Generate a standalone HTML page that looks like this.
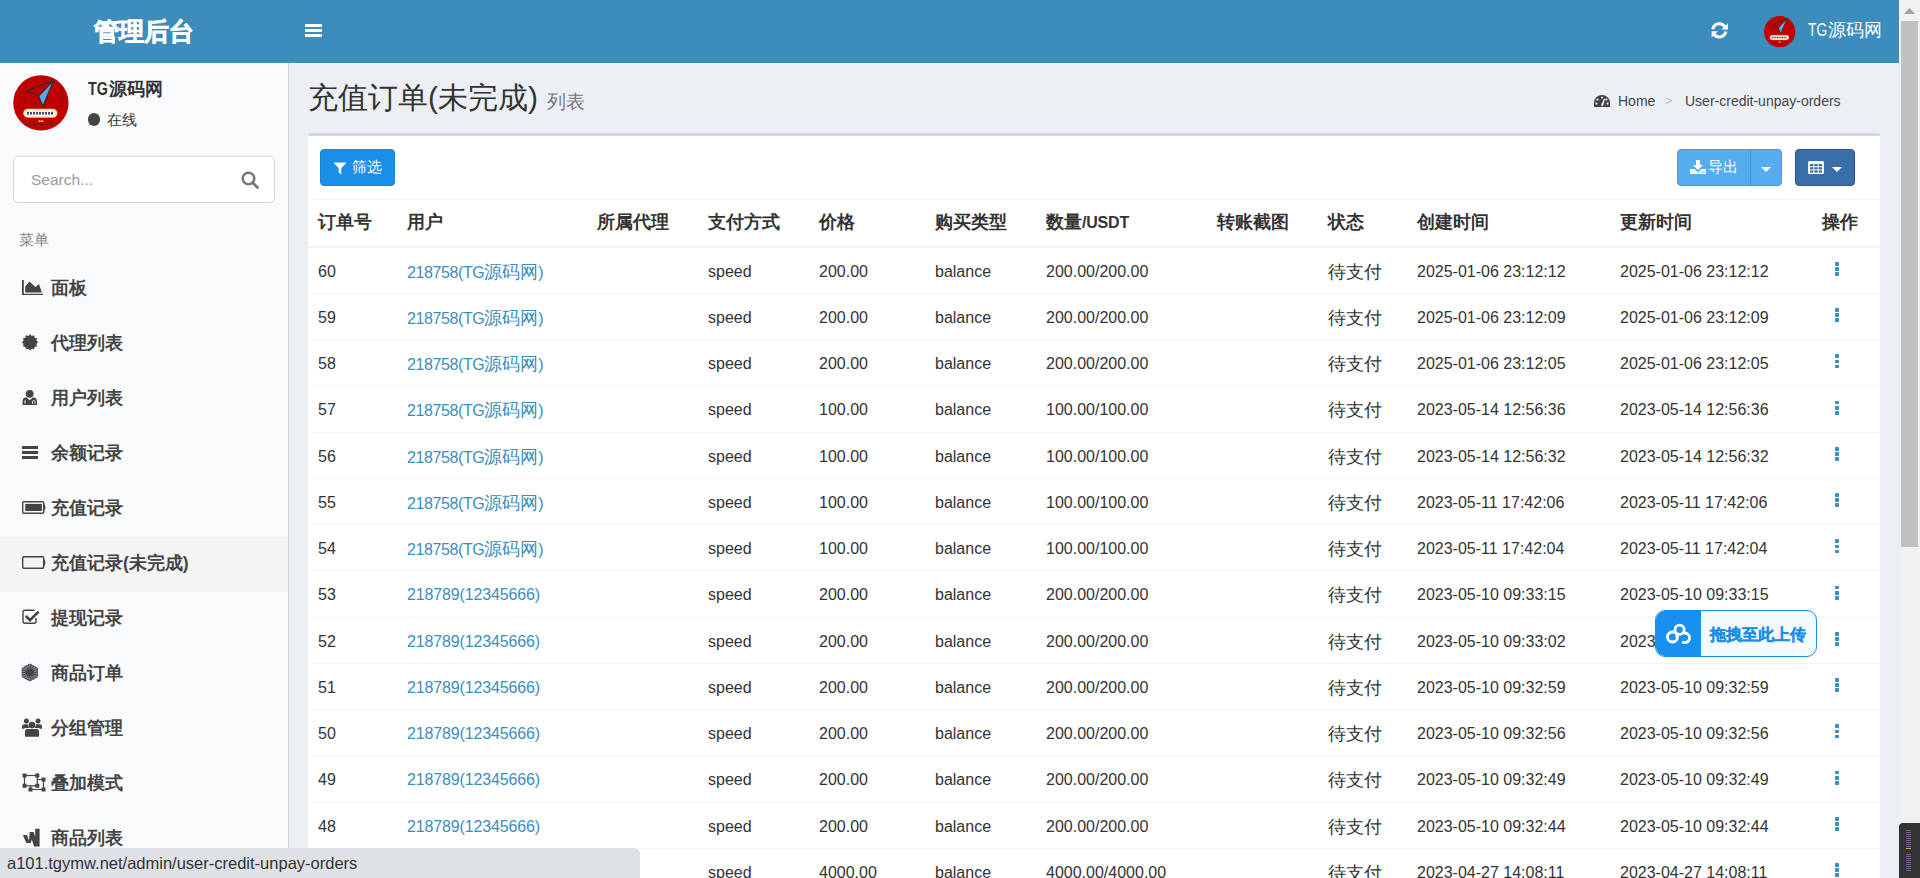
<!DOCTYPE html>
<html><head><meta charset="utf-8">
<style>
*{box-sizing:border-box;margin:0;padding:0}
html,body{width:1920px;height:878px;overflow:hidden}
body{position:relative;background:#ecf0f5;font-family:"Liberation Sans",sans-serif;color:#333;font-size:16px}
.abs{position:absolute}
.header{position:absolute;left:0;top:0;width:1899px;height:63px;background:#3c8dbc}
.logo{position:absolute;left:94px;top:14px;font-size:25px;font-weight:bold;-webkit-text-stroke:0.7px #fff;color:#fff;line-height:34px;letter-spacing:0}
.burger{position:absolute;left:305px;top:24px;width:17px;height:13px}
.burger i{position:absolute;left:0;width:17px;height:2.6px;background:#fff}
.hname{position:absolute;left:1808px;top:17px;color:#fff;font-size:17.5px;line-height:26px}
.sidebar{position:absolute;left:0;top:63px;width:289px;height:815px;background:#f9fafc;border-right:1px solid #d2d6de}
.uname{position:absolute;left:88px;top:77px;font-size:17.5px;font-weight:bold;color:#333;line-height:24px}
.online{position:absolute;left:87.5px;top:107.5px;font-size:15px;color:#333;line-height:24px}
.online b{display:inline-block;width:12.5px;height:12.5px;border-radius:50%;background:#444;vertical-align:-1px;margin-right:7px}
.search{position:absolute;left:13px;top:156px;width:262px;height:47px;background:#fff;border:1px solid #d2d6de;border-radius:4px}
.search span{position:absolute;left:17px;top:11px;font-size:15.5px;color:#999;line-height:24px}
.mhead{position:absolute;left:19px;top:230.5px;font-size:15px;color:#848484;line-height:18px}
.menu{position:absolute;left:0;width:288px;height:55px}
.menu.active{background:#f4f4f5}
.menu .ic{position:absolute;left:22px;top:18px;width:24px;height:20px}
.menu .tx{position:absolute;left:51px;top:13px;font-size:17.5px;font-weight:bold;color:#444;line-height:26px}
.ch{position:absolute;left:308px;top:78px;font-size:30px;color:#333;line-height:40px;white-space:nowrap}
.ch small{font-size:18.75px;color:#777;margin-left:9px}
.bc{position:absolute;left:1593px;top:90px;font-size:14px;color:#444;line-height:22px;white-space:nowrap}
.box{position:absolute;left:308px;top:133px;width:1572px;height:760px;background:#fff;border-radius:3px}
.boxtop{position:absolute;left:0;top:0;width:1572px;height:3px;background:#d2d6de;border-radius:3px 3px 0 0}
.btn{position:absolute;border-radius:4px;color:#fff}
.thead{position:absolute;left:0;top:66px;width:1572px;height:49px;border-top:1px solid #f4f4f4;border-bottom:2.5px solid #f4f4f4}
.th{position:absolute;top:9px;font-size:17.5px;font-weight:bold;color:#333;line-height:26px;white-space:nowrap}
.tgw{display:inline-block;vertical-align:top;white-space:nowrap}.tgi{display:inline-block;transform-origin:0 0}
.tr{position:absolute;left:0;width:1572px;height:46.25px;border-bottom:1px solid #f4f4f4}
.c{position:absolute;top:12px;font-size:16px;color:#333;line-height:24px;white-space:nowrap}
.cj{font-size:17.5px}
.c .cj{font-size:17.5px}
.link{color:#3c8dbc}
.c1{left:10px}.c2{left:99px}.c4{left:400px}.c5{left:511px}.c6{left:627px}.c7{left:738px}.c9{left:1020px}.c10{left:1109px}.c11{left:1312px}.c12{left:1527px}
.dots{top:14.3px;width:4px;height:14px}
.dots i{position:absolute;left:0;width:4px;height:3.7px;background:#3c8dbc;border-radius:0.8px}
.dots i:nth-child(1){top:0}.dots i:nth-child(2){top:5.1px}.dots i:nth-child(3){top:10.2px}
.scroll{position:absolute;left:1899px;top:0;width:21px;height:878px;background:#f1f1f1}
.thumb{position:absolute;left:2px;top:21px;width:17px;height:526px;background:#c1c1c1}
.status{position:absolute;left:0;top:848px;width:640px;height:30px;background:#dee1e6;border-top-right-radius:6px;font-size:16.5px;color:#333;line-height:30px;padding-left:7px;white-space:nowrap}
.upl{position:absolute;left:1655px;top:610px;width:162px;height:47px;border:1.5px solid #1890f0;border-radius:10px;background:#f2f9ff;overflow:hidden}
.upl .ico{position:absolute;left:0;top:0;width:45px;height:47px;background:#1890f0}
.upl .t{position:absolute;left:53.5px;top:11.5px;-webkit-text-stroke:0.3px #1a8de6;font-size:16px;font-weight:bold;color:#1a8de6;line-height:24px;white-space:nowrap}
.dark{position:absolute;left:1899px;top:823px;width:21px;height:55px;background:#333;border-top-left-radius:4px}
.dark i{position:absolute;left:7px;width:5px;height:1.2px;background:#7a5f86}
</style></head><body>
<div class="header">
  <div class="logo">管理后台</div>
  <div class="burger"><i style="top:0"></i><i style="top:5px"></i><i style="top:10px"></i></div>
  <svg class="abs" style="left:1711px;top:22px" width="18" height="17" viewBox="0 0 18 17"><g fill="none" stroke="#fff" stroke-width="3"><path d="M1.80 7.20A6.6 6.6 0 0 1 13.71 4.56"/><path d="M14.80 9.50A6.6 6.6 0 0 1 2.89 12.14"/></g><path d="M16.9 1.2V7.4H10.5Z" fill="#fff"/><path d="M0.6 9.3H7L0.6 15.6Z" fill="#fff"/></svg>
  <svg class="abs" style="left:1764px;top:16px" width="31.5" height="31.5" viewBox="0 0 56 56"><circle cx="27.9" cy="27.9" r="27.7" fill="#c00000"/><path d="M40.8 5.1L13.6 16.1L25.6 21Z" fill="none" stroke="#3a2a2a" stroke-width="1.3" stroke-linejoin="round"/><path d="M40.8 5.1L25.6 21L29.8 31.6Z" fill="#5aa8e6" stroke="#3a2a2a" stroke-width="1.3" stroke-linejoin="round"/><path d="M11 12V30M49 12V30M23 27L20 30" stroke="#3a2a2a" stroke-width="0.9" stroke-dasharray="1.5 1.5"/><rect x="10.5" y="34" width="33.7" height="8.5" rx="4.25" fill="#f6efd8" stroke="#e8c070" stroke-width="0.6"/><path d="M14 38.3H41" stroke="#4a4a7a" stroke-width="2.6" stroke-dasharray="2 1"/><path d="M13 49.3H41" stroke="#3a2a2a" stroke-width="1" stroke-dasharray="1.5 0.8"/><path d="M25 47L26.5 44.5L28 46L29.5 44.5L31 47Z" fill="#e8b030"/></svg>
  <div class="hname"><span class="tgw" style="width:19.5px"><span class="tgi" style="transform:scaleX(.79)">TG</span></span>源码网</div>
</div>
<div class="sidebar"></div>
<svg class="abs" style="left:13px;top:75px" width="56" height="56" viewBox="0 0 56 56"><circle cx="27.9" cy="27.9" r="27.7" fill="#c00000"/><path d="M40.8 5.1L13.6 16.1L25.6 21Z" fill="none" stroke="#3a2a2a" stroke-width="1.3" stroke-linejoin="round"/><path d="M40.8 5.1L25.6 21L29.8 31.6Z" fill="#5aa8e6" stroke="#3a2a2a" stroke-width="1.3" stroke-linejoin="round"/><path d="M11 12V30M49 12V30M23 27L20 30" stroke="#3a2a2a" stroke-width="0.9" stroke-dasharray="1.5 1.5"/><rect x="10.5" y="34" width="33.7" height="8.5" rx="4.25" fill="#f6efd8" stroke="#e8c070" stroke-width="0.6"/><path d="M14 38.3H41" stroke="#4a4a7a" stroke-width="2.6" stroke-dasharray="2 1"/><path d="M13 49.3H41" stroke="#3a2a2a" stroke-width="1" stroke-dasharray="1.5 0.8"/><path d="M25 47L26.5 44.5L28 46L29.5 44.5L31 47Z" fill="#e8b030"/></svg>
<div class="uname"><span class="tgw" style="width:20.5px"><span class="tgi" style="transform:scaleX(.82)">TG</span></span>源码网</div>
<div class="online"><b></b>在线</div>
<div class="search"><span>Search...</span>
 <svg class="abs" style="left:227px;top:14px" width="18" height="18" viewBox="0 0 18 18"><circle cx="7.5" cy="7.5" r="5.8" stroke="#777" stroke-width="2.4" fill="none"/><path d="M11.5 11.5L16.5 16.5" stroke="#777" stroke-width="2.8" stroke-linecap="round"/></svg></div>
<div class="mhead">菜单</div>
<div class="menu" style="top:261.5px"><span class="tx">面板</span></div>
<div class="menu" style="top:316.5px"><span class="tx">代理列表</span></div>
<div class="menu" style="top:371.5px"><span class="tx">用户列表</span></div>
<div class="menu" style="top:426.5px"><span class="tx">余额记录</span></div>
<div class="menu" style="top:481.5px"><span class="tx">充值记录</span></div>
<div class="menu active" style="top:536.5px"><span class="tx">充值记录(未完成)</span></div>
<div class="menu" style="top:591.5px"><span class="tx">提现记录</span></div>
<div class="menu" style="top:646.5px"><span class="tx">商品订单</span></div>
<div class="menu" style="top:701.5px"><span class="tx">分组管理</span></div>
<div class="menu" style="top:756.5px"><span class="tx">叠加模式</span></div>
<div class="menu" style="top:811.5px"><span class="tx">商品列表</span></div><svg class="abs" style="left:0;top:0" width="60" height="878" viewBox="0 0 60 878"><path d="M22 280H23.8V293.7H43V295H22Z" fill="#444"/><path d="M25.2 292.6V286.6L29.4 281.6L35.5 287L38.9 284.1L41.9 292.6Z" fill="#444"/><path d="M30.00 334.20 L31.71 335.92 L34.05 335.29 L34.67 337.63 L37.01 338.25 L36.38 340.59 L38.10 342.30 L36.38 344.01 L37.01 346.35 L34.67 346.97 L34.05 349.31 L31.71 348.68 L30.00 350.40 L28.29 348.68 L25.95 349.31 L25.33 346.97 L22.99 346.35 L23.62 344.01 L21.90 342.30 L23.62 340.59 L22.99 338.25 L25.33 337.63 L25.95 335.29 L28.29 335.92Z" fill="#444"/><circle cx="29.7" cy="393.8" r="3.9" fill="#444"/><path d="M22.5 405V401.8Q22.5 397.6 26.3 397.3L29.7 400.2L33.1 397.3Q37 397.6 37 401.8V405Z" fill="#444"/><path d="M25 403.5V400.5" stroke="#fff" stroke-width="1"/><path d="M32.5 403.8V401.5A1.3 1.3 0 0 1 35 401.5V403.8" stroke="#fff" stroke-width="0.9" fill="none"/><rect x="22" y="446" width="16" height="3" fill="#444"/><rect x="22" y="451" width="16" height="3" fill="#444"/><rect x="22" y="456" width="16" height="3" fill="#444"/><rect x="22.7" y="501.7" width="21" height="11.6" rx="1" fill="none" stroke="#444" stroke-width="1.4"/><path d="M43.5 504.5Q46 507.5 43.5 510.5" stroke="#444" stroke-width="1.4" fill="none"/><rect x="25.3" y="503.9" width="16.6" height="7.1" fill="#444"/><rect x="22.7" y="556.7" width="21" height="11.6" rx="1" fill="none" stroke="#444" stroke-width="1.4"/><path d="M43.5 559.5Q46 562.5 43.5 565.5" stroke="#444" stroke-width="1.4" fill="none"/><path d="M34.6 610.3H25A2 2 0 0 0 23 612.3V621.3A2 2 0 0 0 25 623.3H34A2 2 0 0 0 36 621.3V618" fill="none" stroke="#444" stroke-width="1.4"/><path d="M25.8 616L30 620.2L38.6 611.6" fill="none" stroke="#444" stroke-width="2.6"/><path d="M29.90 663.70 L38.00 668.10 L38.00 676.90 L29.90 681.30 L21.80 676.90 L21.80 668.10Z" fill="#8a8c9c"/><g stroke="#3c3c50" stroke-width="1"><path d="M34.20 672.50L37.90 672.50" /><path d="M33.94 673.97L37.42 675.24" /><path d="M33.19 675.26L36.03 677.64" /><path d="M32.05 676.22L33.90 679.43" /><path d="M30.65 676.73L31.29 680.38" /><path d="M29.15 676.73L28.51 680.38" /><path d="M27.75 676.22L25.90 679.43" /><path d="M26.61 675.26L23.77 677.64" /><path d="M25.86 673.97L22.38 675.24" /><path d="M25.60 672.50L21.90 672.50" /><path d="M25.86 671.03L22.38 669.76" /><path d="M26.61 669.74L23.77 667.36" /><path d="M27.75 668.78L25.90 665.57" /><path d="M29.15 668.27L28.51 664.62" /><path d="M30.65 668.27L31.29 664.62" /><path d="M32.05 668.78L33.90 665.57" /><path d="M33.19 669.74L36.03 667.36" /><path d="M33.94 671.03L37.42 669.76" /></g><path d="M29.90 664.20 L37.50 668.35 L37.50 676.65 L29.90 680.80 L22.30 676.65 L22.30 668.35Z" fill="none" stroke="#555" stroke-width="1"/><circle cx="29.9" cy="672.5" r="4.3" fill="#444"/><circle cx="32" cy="725" r="3.3" fill="#444"/><circle cx="26.4" cy="721" r="2.5" fill="#444"/><circle cx="38" cy="721" r="2.5" fill="#444"/><path d="M22 729V726.5Q22 724.3 24.2 724.3H27.8Q28.5 726.6 29.5 728H26Z" fill="#444"/><path d="M42 729V726.5Q42 724.3 39.8 724.3H36.2Q35.5 726.6 34.5 728H38Z" fill="#444"/><path d="M25 736.7V731.3Q25 729 27.3 729H36.7Q39 729 39 731.3V736.7Z" fill="#444"/><g fill="none" stroke="#444" stroke-width="1.2"><rect x="24.5" y="775.5" width="12.8" height="10.3"/><path d="M37.3 779.5H43.5V789.5H30.5V785.8"/></g><g fill="#444"><rect x="22.5" y="773.5" width="4" height="4"/><rect x="35.3" y="773.5" width="4" height="4"/><rect x="22.5" y="783.8" width="4" height="4"/><rect x="35.3" y="783.8" width="4" height="4"/><rect x="41.5" y="777.5" width="4" height="4"/><rect x="41.5" y="787.5" width="4" height="4"/><rect x="28.5" y="787.5" width="4" height="4"/></g><path d="M22.9 835.1H27L29 840.6L29.7 832H33.6L35.2 836.8V828.7H39.6V846.4H34.1L31.8 839.5L30.7 843H26.3Z" fill="#444"/></svg>
<div class="ch">充值订单(未完成)<small>列表</small></div>
<svg class="abs" style="left:1594px;top:95px" width="16" height="12" viewBox="0 0 16 12"><path d="M8 0A8 8 0 0 0 0 8V12H16V8A8 8 0 0 0 8 0Z" fill="#444"/><circle cx="8" cy="2.6" r="1.1" fill="#ecf0f5"/><circle cx="3.6" cy="4.6" r="1.1" fill="#ecf0f5"/><circle cx="12.4" cy="4.6" r="1.1" fill="#ecf0f5"/><circle cx="2.4" cy="8.6" r="1.1" fill="#ecf0f5"/><circle cx="13.6" cy="8.6" r="1.1" fill="#ecf0f5"/><path d="M7 10.5L10 3.5L11 4L9 11Z" fill="#ecf0f5"/></svg>
<div class="bc" style="left:1618px">Home</div><div class="bc" style="left:1665px;color:#bbb;font-size:13px">&gt;</div><div class="bc bcl" style="left:1685px">User-credit-unpay-orders</div>
<div class="box"><div class="boxtop"></div>

<div class="btn" style="left:12px;top:16px;width:75px;height:37px;background:#1b8ee8;border:1px solid #1f7fd0">
 <svg class="abs" style="left:12px;top:12px" width="14" height="13" viewBox="0 0 14 13"><path d="M0.5 0.5H13.5L8.3 6.2V12.5L5.7 10.8V6.2Z" fill="#fff"/></svg>
 <span class="abs" style="left:31px;top:7px;font-size:15px;line-height:20px;color:#fff">筛选</span>
</div>
<div class="btn" style="left:1369px;top:16px;width:105px;height:37px;background:#55acee;border:1px solid #3f9fe4">
 <svg class="abs" style="left:12px;top:10px" width="16" height="14" viewBox="0 0 16 14"><path d="M6 0H10V5H13L8 10L3 5H6Z" fill="#fff"/><path d="M0 9H4.5L8 12.5L11.5 9H16V14H0Z" fill="#fff"/><rect x="11.5" y="11.5" width="1.3" height="1.3" fill="#55acee"/><rect x="13.5" y="11.5" width="1.3" height="1.3" fill="#55acee"/></svg>
 <span class="abs" style="left:30px;top:7px;font-size:15px;line-height:20px;color:#fff">导出</span>
 <div class="abs" style="left:72px;top:-1px;width:1px;height:37px;background:#3d93d6"></div>
 <svg class="abs" style="left:83px;top:17px" width="10" height="5" viewBox="0 0 10 5"><path d="M0 0H10L5 5Z" fill="#fff"/></svg>
</div>
<div class="btn" style="left:1487px;top:16px;width:60px;height:37px;background:#3a6ea8;border:1px solid #2d4f8c">
 <svg class="abs" style="left:12px;top:11px" width="16" height="13" viewBox="0 0 16 13"><path d="M1.5 0H14.5A1.5 1.5 0 0 1 16 1.5V11.5A1.5 1.5 0 0 1 14.5 13H1.5A1.5 1.5 0 0 1 0 11.5V1.5A1.5 1.5 0 0 1 1.5 0Z" fill="#fff"/><g fill="#3a6ea8"><rect x="2" y="3" width="3.4" height="2.2"/><rect x="6.3" y="3" width="3.4" height="2.2"/><rect x="10.6" y="3" width="3.4" height="2.2"/><rect x="2" y="6.2" width="3.4" height="2.2"/><rect x="6.3" y="6.2" width="3.4" height="2.2"/><rect x="10.6" y="6.2" width="3.4" height="2.2"/><rect x="2" y="9.4" width="3.4" height="2.2"/><rect x="6.3" y="9.4" width="3.4" height="2.2"/><rect x="10.6" y="9.4" width="3.4" height="2.2"/></g></svg>
 <svg class="abs" style="left:36px;top:17px" width="10" height="5" viewBox="0 0 10 5"><path d="M0 0H10L5 5Z" fill="#fff"/></svg>
</div>

<div class="thead">
 <span class="th" style="left:10px">订单号</span><span class="th" style="left:99px">用户</span><span class="th" style="left:289px">所属代理</span><span class="th" style="left:400px">支付方式</span><span class="th" style="left:511px">价格</span><span class="th" style="left:627px">购买类型</span><span class="th" style="left:738px">数量<span style="font-size:16px;letter-spacing:-0.2px">/USDT</span></span><span class="th" style="left:909px">转账截图</span><span class="th" style="left:1020px">状态</span><span class="th" style="left:1109px">创建时间</span><span class="th" style="left:1312px">更新时间</span><span class="th" style="left:1514px">操作</span>
</div>
<div class="tr" style="top:114.70px"><span class="c c1">60</span><span class="c c2 link"><span style="letter-spacing:-0.4px">218758(TG</span><span class=cj>源码网</span>)</span><span class="c c4">speed</span><span class="c c5">200.00</span><span class="c c6">balance</span><span class="c c7">200.00/200.00</span><span class="c c9 cj">待支付</span><span class="c c10">2025-01-06 23:12:12</span><span class="c c11">2025-01-06 23:12:12</span><span class="c c12 dots"><i></i><i></i><i></i></span></div>
<div class="tr" style="top:160.95px"><span class="c c1">59</span><span class="c c2 link"><span style="letter-spacing:-0.4px">218758(TG</span><span class=cj>源码网</span>)</span><span class="c c4">speed</span><span class="c c5">200.00</span><span class="c c6">balance</span><span class="c c7">200.00/200.00</span><span class="c c9 cj">待支付</span><span class="c c10">2025-01-06 23:12:09</span><span class="c c11">2025-01-06 23:12:09</span><span class="c c12 dots"><i></i><i></i><i></i></span></div>
<div class="tr" style="top:207.20px"><span class="c c1">58</span><span class="c c2 link"><span style="letter-spacing:-0.4px">218758(TG</span><span class=cj>源码网</span>)</span><span class="c c4">speed</span><span class="c c5">200.00</span><span class="c c6">balance</span><span class="c c7">200.00/200.00</span><span class="c c9 cj">待支付</span><span class="c c10">2025-01-06 23:12:05</span><span class="c c11">2025-01-06 23:12:05</span><span class="c c12 dots"><i></i><i></i><i></i></span></div>
<div class="tr" style="top:253.45px"><span class="c c1">57</span><span class="c c2 link"><span style="letter-spacing:-0.4px">218758(TG</span><span class=cj>源码网</span>)</span><span class="c c4">speed</span><span class="c c5">100.00</span><span class="c c6">balance</span><span class="c c7">100.00/100.00</span><span class="c c9 cj">待支付</span><span class="c c10">2023-05-14 12:56:36</span><span class="c c11">2023-05-14 12:56:36</span><span class="c c12 dots"><i></i><i></i><i></i></span></div>
<div class="tr" style="top:299.70px"><span class="c c1">56</span><span class="c c2 link"><span style="letter-spacing:-0.4px">218758(TG</span><span class=cj>源码网</span>)</span><span class="c c4">speed</span><span class="c c5">100.00</span><span class="c c6">balance</span><span class="c c7">100.00/100.00</span><span class="c c9 cj">待支付</span><span class="c c10">2023-05-14 12:56:32</span><span class="c c11">2023-05-14 12:56:32</span><span class="c c12 dots"><i></i><i></i><i></i></span></div>
<div class="tr" style="top:345.95px"><span class="c c1">55</span><span class="c c2 link"><span style="letter-spacing:-0.4px">218758(TG</span><span class=cj>源码网</span>)</span><span class="c c4">speed</span><span class="c c5">100.00</span><span class="c c6">balance</span><span class="c c7">100.00/100.00</span><span class="c c9 cj">待支付</span><span class="c c10">2023-05-11 17:42:06</span><span class="c c11">2023-05-11 17:42:06</span><span class="c c12 dots"><i></i><i></i><i></i></span></div>
<div class="tr" style="top:392.20px"><span class="c c1">54</span><span class="c c2 link"><span style="letter-spacing:-0.4px">218758(TG</span><span class=cj>源码网</span>)</span><span class="c c4">speed</span><span class="c c5">100.00</span><span class="c c6">balance</span><span class="c c7">100.00/100.00</span><span class="c c9 cj">待支付</span><span class="c c10">2023-05-11 17:42:04</span><span class="c c11">2023-05-11 17:42:04</span><span class="c c12 dots"><i></i><i></i><i></i></span></div>
<div class="tr" style="top:438.45px"><span class="c c1">53</span><span class="c c2 link"><span style="letter-spacing:-0.15px">218789(12345666)</span></span><span class="c c4">speed</span><span class="c c5">200.00</span><span class="c c6">balance</span><span class="c c7">200.00/200.00</span><span class="c c9 cj">待支付</span><span class="c c10">2023-05-10 09:33:15</span><span class="c c11">2023-05-10 09:33:15</span><span class="c c12 dots"><i></i><i></i><i></i></span></div>
<div class="tr" style="top:484.70px"><span class="c c1">52</span><span class="c c2 link"><span style="letter-spacing:-0.15px">218789(12345666)</span></span><span class="c c4">speed</span><span class="c c5">200.00</span><span class="c c6">balance</span><span class="c c7">200.00/200.00</span><span class="c c9 cj">待支付</span><span class="c c10">2023-05-10 09:33:02</span><span class="c c11">2023-05-10 09:33:02</span><span class="c c12 dots"><i></i><i></i><i></i></span></div>
<div class="tr" style="top:530.95px"><span class="c c1">51</span><span class="c c2 link"><span style="letter-spacing:-0.15px">218789(12345666)</span></span><span class="c c4">speed</span><span class="c c5">200.00</span><span class="c c6">balance</span><span class="c c7">200.00/200.00</span><span class="c c9 cj">待支付</span><span class="c c10">2023-05-10 09:32:59</span><span class="c c11">2023-05-10 09:32:59</span><span class="c c12 dots"><i></i><i></i><i></i></span></div>
<div class="tr" style="top:577.20px"><span class="c c1">50</span><span class="c c2 link"><span style="letter-spacing:-0.15px">218789(12345666)</span></span><span class="c c4">speed</span><span class="c c5">200.00</span><span class="c c6">balance</span><span class="c c7">200.00/200.00</span><span class="c c9 cj">待支付</span><span class="c c10">2023-05-10 09:32:56</span><span class="c c11">2023-05-10 09:32:56</span><span class="c c12 dots"><i></i><i></i><i></i></span></div>
<div class="tr" style="top:623.45px"><span class="c c1">49</span><span class="c c2 link"><span style="letter-spacing:-0.15px">218789(12345666)</span></span><span class="c c4">speed</span><span class="c c5">200.00</span><span class="c c6">balance</span><span class="c c7">200.00/200.00</span><span class="c c9 cj">待支付</span><span class="c c10">2023-05-10 09:32:49</span><span class="c c11">2023-05-10 09:32:49</span><span class="c c12 dots"><i></i><i></i><i></i></span></div>
<div class="tr" style="top:669.70px"><span class="c c1">48</span><span class="c c2 link"><span style="letter-spacing:-0.15px">218789(12345666)</span></span><span class="c c4">speed</span><span class="c c5">200.00</span><span class="c c6">balance</span><span class="c c7">200.00/200.00</span><span class="c c9 cj">待支付</span><span class="c c10">2023-05-10 09:32:44</span><span class="c c11">2023-05-10 09:32:44</span><span class="c c12 dots"><i></i><i></i><i></i></span></div>
<div class="tr" style="top:715.95px"><span class="c c1">47</span><span class="c c2 link"><span style="letter-spacing:-0.15px">218789(12345666)</span></span><span class="c c4">speed</span><span class="c c5">4000.00</span><span class="c c6">balance</span><span class="c c7">4000.00/4000.00</span><span class="c c9 cj">待支付</span><span class="c c10">2023-04-27 14:08:11</span><span class="c c11">2023-04-27 14:08:11</span><span class="c c12 dots"><i></i><i></i><i></i></span></div>
</div>
<div class="upl"><div class="ico"><svg class="abs" style="left:0;top:0" width="45" height="47" viewBox="0 0 45 47"><g fill="none" stroke="#fff" stroke-width="2.8"><circle cx="23.6" cy="18.7" r="4.6"/><circle cx="16.5" cy="26" r="5"/><path d="M27.5 22.2A4.8 4.8 0 1 1 26.2 30.8"/><path d="M21.2 26.3L20.2 24.6"/></g></svg></div><span class="t">拖拽至此上传</span></div>
<div class="status">a101.tgymw.net/admin/user-credit-unpay-orders</div>
<div class="scroll"><svg class="abs" style="left:5px;top:8px" width="11" height="6" viewBox="0 0 11 6"><path d="M0 6L5.5 0L11 6Z" fill="#a3a3a3"/></svg><div class="thumb"></div></div>
<div class="dark"><i style="top:7px"></i><i style="top:9px"></i><i style="top:11px"></i><i style="top:13px"></i><i style="top:15px"></i><i style="top:17px"></i><i style="top:19px"></i><i style="top:21px"></i><i style="top:23px"></i><i style="top:25px;background:#e0a030"></i><i style="top:31px"></i><i style="top:33px"></i><i style="top:35px"></i><i style="top:37px"></i><i style="top:39px"></i><i style="top:41px"></i><i style="top:43px"></i><i style="top:45px"></i><i style="top:47px"></i></div>
</body></html>
